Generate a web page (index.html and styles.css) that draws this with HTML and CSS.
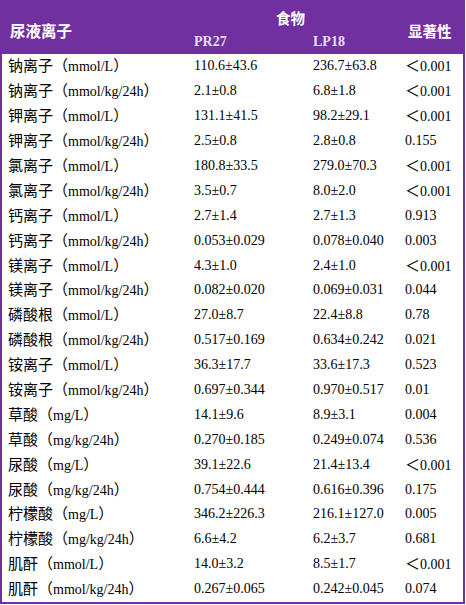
FILE: index.html
```html
<!DOCTYPE html>
<html lang="zh">
<head>
<meta charset="utf-8">
<link rel="stylesheet" href="styles.css">
</head>
<body>
<div class="table">
  <div class="head">
    <div class="h-label">尿液离子</div>
    <div class="h-food">食物</div>
    <div class="h-sig">显著性</div>
    <div class="h-sub">PR27</div>
    <div class="h-sub">LP18</div>
  </div>
  <div class="row"><div class="c-label"><span class="zh">钠离子（</span>mmol/L<span class="zh">）</span></div><div>110.6±43.6</div><div>236.7±63.8</div><div><span class="zh">＜</span>0.001</div></div>
  <div class="row"><div class="c-label"><span class="zh">钠离子（</span>mmol/kg/24h<span class="zh">）</span></div><div>2.1±0.8</div><div>6.8±1.8</div><div><span class="zh">＜</span>0.001</div></div>
  <div class="row"><div class="c-label"><span class="zh">钾离子（</span>mmol/L<span class="zh">）</span></div><div>131.1±41.5</div><div>98.2±29.1</div><div><span class="zh">＜</span>0.001</div></div>
  <div class="row"><div class="c-label"><span class="zh">钾离子（</span>mmol/kg/24h<span class="zh">）</span></div><div>2.5±0.8</div><div>2.8±0.8</div><div>0.155</div></div>
  <div class="row"><div class="c-label"><span class="zh">氯离子（</span>mmol/L<span class="zh">）</span></div><div>180.8±33.5</div><div>279.0±70.3</div><div><span class="zh">＜</span>0.001</div></div>
  <div class="row"><div class="c-label"><span class="zh">氯离子（</span>mmol/kg/24h<span class="zh">）</span></div><div>3.5±0.7</div><div>8.0±2.0</div><div><span class="zh">＜</span>0.001</div></div>
  <div class="row"><div class="c-label"><span class="zh">钙离子（</span>mmol/L<span class="zh">）</span></div><div>2.7±1.4</div><div>2.7±1.3</div><div>0.913</div></div>
  <div class="row"><div class="c-label"><span class="zh">钙离子（</span>mmol/kg/24h<span class="zh">）</span></div><div>0.053±0.029</div><div>0.078±0.040</div><div>0.003</div></div>
  <div class="row"><div class="c-label"><span class="zh">镁离子（</span>mmol/L<span class="zh">）</span></div><div>4.3±1.0</div><div>2.4±1.0</div><div><span class="zh">＜</span>0.001</div></div>
  <div class="row"><div class="c-label"><span class="zh">镁离子（</span>mmol/kg/24h<span class="zh">）</span></div><div>0.082±0.020</div><div>0.069±0.031</div><div>0.044</div></div>
  <div class="row"><div class="c-label"><span class="zh">磷酸根（</span>mmol/L<span class="zh">）</span></div><div>27.0±8.7</div><div>22.4±8.8</div><div>0.78</div></div>
  <div class="row"><div class="c-label"><span class="zh">磷酸根（</span>mmol/kg/24h<span class="zh">）</span></div><div>0.517±0.169</div><div>0.634±0.242</div><div>0.021</div></div>
  <div class="row"><div class="c-label"><span class="zh">铵离子（</span>mmol/L<span class="zh">）</span></div><div>36.3±17.7</div><div>33.6±17.3</div><div>0.523</div></div>
  <div class="row"><div class="c-label"><span class="zh">铵离子（</span>mmol/kg/24h<span class="zh">）</span></div><div>0.697±0.344</div><div>0.970±0.517</div><div>0.01</div></div>
  <div class="row"><div class="c-label"><span class="zh">草酸（</span>mg/L<span class="zh">）</span></div><div>14.1±9.6</div><div>8.9±3.1</div><div>0.004</div></div>
  <div class="row"><div class="c-label"><span class="zh">草酸（</span>mg/kg/24h<span class="zh">）</span></div><div>0.270±0.185</div><div>0.249±0.074</div><div>0.536</div></div>
  <div class="row"><div class="c-label"><span class="zh">尿酸（</span>mg/L<span class="zh">）</span></div><div>39.1±22.6</div><div>21.4±13.4</div><div><span class="zh">＜</span>0.001</div></div>
  <div class="row"><div class="c-label"><span class="zh">尿酸（</span>mg/kg/24h<span class="zh">）</span></div><div>0.754±0.444</div><div>0.616±0.396</div><div>0.175</div></div>
  <div class="row"><div class="c-label"><span class="zh">柠檬酸（</span>mg/L<span class="zh">）</span></div><div>346.2±226.3</div><div>216.1±127.0</div><div>0.005</div></div>
  <div class="row"><div class="c-label"><span class="zh">柠檬酸（</span>mg/kg/24h<span class="zh">）</span></div><div>6.6±4.2</div><div>6.2±3.7</div><div>0.681</div></div>
  <div class="row"><div class="c-label"><span class="zh">肌酐（</span>mmol/L<span class="zh">）</span></div><div>14.0±3.2</div><div>8.5±1.7</div><div><span class="zh">＜</span>0.001</div></div>
  <div class="row"><div class="c-label"><span class="zh">肌酐（</span>mmol/kg/24h<span class="zh">）</span></div><div>0.267±0.065</div><div>0.242±0.045</div><div>0.074</div></div>
</div>
</body>
</html>
```
FILE: styles.css
```css
html, body {
  margin: 0;
  padding: 0;
  background: #ffffff;
}
body {
  font-family: "Liberation Serif", "Noto Sans CJK SC", serif;
  font-size: 14px;
  color: #000000;
}
.table {
  width: 461px;
  border: 2px solid #7030a0;
  border-top: none;
  background: #ffffff;
}
.head {
  display: grid;
  grid-template-columns: 192px 119px 92px 1fr;
  grid-template-rows: 32px 22px;
  background: #7030a0;
  color: #ffffff;
  font-weight: bold;
  margin: 0 -2px;
  padding: 0 2px;
}
.h-label {
  grid-column: 1;
  grid-row: 1 / span 2;
  align-self: center;
  padding: 6px 0 0 8px;
  font-family: "Noto Sans CJK SC", sans-serif;
  font-size: 15.5px;
}
.h-food {
  grid-column: 2 / span 2;
  grid-row: 1;
  align-self: center;
  padding: 2px 0 0 82px;
  font-family: "Noto Sans CJK SC", sans-serif;
  font-size: 14.5px;
}
.h-sig {
  grid-column: 4;
  grid-row: 1 / span 2;
  align-self: center;
  padding: 6px 0 0 3px;
  font-family: "Noto Sans CJK SC", sans-serif;
  font-size: 14.5px;
}
.h-sub {
  grid-row: 2;
  align-self: center;
  color: #e8dcf6;
  font-size: 14px;
  padding-bottom: 2px;
}
.row {
  display: grid;
  grid-template-columns: 192px 119px 92px 1fr;
  height: 24.9px;
  align-items: center;
  white-space: nowrap;
  line-height: 20px;
}
.c-label {
  padding-left: 6px;
}
.zh {
  font-family: "Noto Sans CJK SC", sans-serif;
  font-size: 15px;
  line-height: 20px;
}
```
